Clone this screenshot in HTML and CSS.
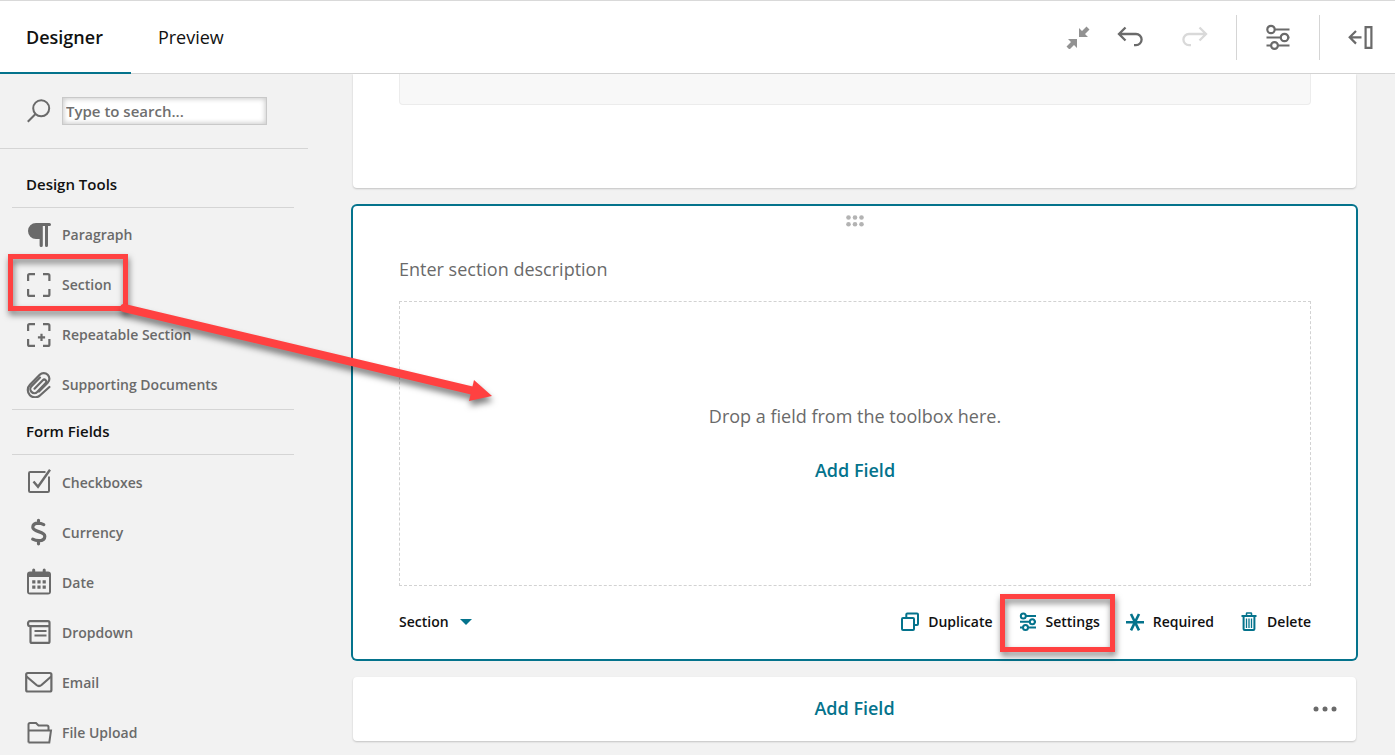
FILE: index.html
```html
<!DOCTYPE html>
<html lang="en">
<head>
  <meta charset="UTF-8">
  <meta name="viewport" content="width=device-width, initial-scale=1.0">
  <title>Form Designer</title>
  <link rel="stylesheet" href="styles.css">
</head>
<body>

  <header class="topbar">
    <nav class="tabs">
      <a href="#designer" class="tab active">Designer</a>
      <a href="#preview" class="tab">Preview</a>
    </nav>
    <div class="actions">
      <button class="icon-btn collapse" aria-label="Collapse">
        <svg width="24" height="24" viewBox="0 0 24 24" fill="#929292"><path d="M13 3v9h9l-3-3 4.500-4.500-3-3L16 6zM2 14h9v9l-3-3-4.500 4.500-3-3L5 17z"/></svg>
      </button>
      <button class="icon-btn undo" aria-label="Undo">
        <svg width="28" height="24" viewBox="0 0 28 24" fill="none" stroke="#6a6a6a" stroke-width="2.300"><path d="M9.500 2.500 3 9 9.500 15.500M3.500 9H20a5.600 5.600 0 0 1 0 11.200h-2"/></svg>
      </button>
      <button class="icon-btn redo" aria-label="Redo" disabled>
        <svg width="28" height="24" viewBox="0 0 28 24" fill="none" stroke="#d9d9d9" stroke-width="2.300"><path d="M18.500 2.500 25 9 18.500 15.500M24.500 9H8a5.600 5.600 0 0 0 0 11.200h2"/></svg>
      </button>
      <button class="icon-btn boxed" aria-label="Form settings">
        <svg width="24" height="26" viewBox="0 0 24 26" fill="none" stroke="#6a6a6a" stroke-width="2.200"><circle cx="5" cy="5.500" r="3.700"/><circle cx="18.500" cy="13.500" r="3.700"/><circle cx="8.500" cy="21.500" r="3.400"/><path d="M8.700 5.500H23.500M.5 13.500h14.300M22.200 13.500h1.300M.5 21.500h4.300M12.200 21.500h11.300"/></svg>
      </button>
      <button class="icon-btn boxed panel" aria-label="Open panel">
        <svg width="26" height="24" viewBox="0 0 26 24" fill="none" stroke="#6a6a6a" stroke-width="2.200"><path d="M8 6 1.700 12.300 8 18.600M2 12.300H13.500"/><path d="M17.600 2.100h5.800v20.800h-5.800z"/></svg>
      </button>
    </div>
  </header>

  <main class="workspace">
    <aside class="toolbox">
      <div class="search">
        <label for="toolSearch" aria-label="Search tools">
          <svg width="24" height="24" viewBox="0 0 24 24" fill="none" stroke="#6a6a6a" stroke-width="2"><circle cx="14.200" cy="9.300" r="8"/><path d="M8.500 15 .8 22.700"/></svg>
        </label>
        <input type="text" id="toolSearch" placeholder="Type to search...">
      </div>

      <section class="tool-group">
        <h2>Design Tools</h2>
        <ul>
          <li><button class="tool">
            <svg width="28" height="28" viewBox="0 0 28 28" fill="#6a6a6a"><path d="M11 3h13.500a1.400 1.400 0 0 1 0 3H23v19.500a1.500 1.500 0 0 1-3 0V6h-2.200v19.500a1.600 1.600 0 0 1-3.200 0V19H11a8 8 0 0 1 0-16z"/></svg>
            Paragraph</button></li>
          <li><button class="tool">
            <svg width="28" height="28" viewBox="0 0 28 28" fill="none" stroke="#6a6a6a" stroke-width="2.200"><path d="M3.100 11V5.600Q3.100 4.100 4.600 4.100H10M18 4.100h4.900q1.500 0 1.500 1.500V11M24.400 19v5.400q0 1.500-1.500 1.500H18M10 25.900H4.600q-1.500 0-1.500-1.500V19"/></svg>
            Section</button><span class="callout callout-tool"></span></li>
          <li><button class="tool">
            <svg width="28" height="28" viewBox="0 0 28 28" fill="none" stroke="#6a6a6a" stroke-width="2.200"><path d="M3.100 11V5.600Q3.100 4.100 4.600 4.100H10M18 4.100h4.900q1.500 0 1.500 1.500V11M24.400 19v5.400q0 1.500-1.500 1.500H18M10 25.900H4.600q-1.500 0-1.500-1.500V19M16.500 13.700v7.200M12.900 17.300h7.200"/></svg>
            Repeatable Section</button></li>
          <li><button class="tool">
            <svg width="28" height="28" viewBox="0 -1 28 28" fill="none" stroke="#6a6a6a" stroke-width="2.200" stroke-linecap="round" stroke-linejoin="round"><path d="M9.500 17.700 17.800 9.200a2 2 0 0 1 2.900 2.900L12.200 20.900a4 4 0 0 1-5.700-5.700L15 6.600"/><path d="M24.400 16 15.200 24.300a7.300 7.300 0 0 1-10.300-.1 7.300 7.300 0 0 1 0-10.300L14.700 3.800a5.600 5.600 0 0 1 8 0 5.600 5.600 0 0 1 0 8L14 20.500"/></svg>
            Supporting Documents</button></li>
        </ul>
      </section>

      <section class="tool-group form-fields">
        <h2>Form Fields</h2>
        <ul>
          <li><button class="tool">
            <svg width="28" height="28" viewBox="0 0 28 28" fill="none" stroke="#6a6a6a" stroke-width="2"><path d="M20.500 4H5.200Q4 4 4 5.200v17.600Q4 24 5.200 24h17.600q1.200 0 1.200-1.200V8.500"/><path d="M8.500 13.500 13 18.800 25 1.800" stroke-width="2.400"/></svg>
            Checkboxes</button></li>
          <li><button class="tool">
            <svg width="28" height="28" viewBox="0 0 28 28" fill="none" stroke="#6a6a6a" stroke-width="3.200" stroke-linecap="round"><path d="M18.800 6.600C16.700 5.600 15 5.200 13.300 5.200 9.800 5.200 7.800 6.900 7.800 9.300c0 5.200 12 3.400 12 9 0 2.700-2.300 4.400-5.900 4.400-2.300 0-4.400-.5-6.200-1.500M13.500 2.300v3M13.500 23v2.800"/></svg>
            Currency</button></li>
          <li><button class="tool">
            <svg width="28" height="28" viewBox="0 0 28 28" fill="#6a6a6a"><path fill-rule="evenodd" d="M7.200 3.500V2a1.500 1.500 0 0 1 3 0v1.500h7.500V2a1.500 1.500 0 0 1 3 0v1.500H23q3 0 3 3v17q0 3-3 3H5q-3 0-3-3v-17q0-3 3-3zM4 9v15.500h20V9z"/><path d="M7.200 12.300h3.200v3.200H7.200zM12.400 12.300h3.200v3.200h-3.200zM17.600 12.300h3.200v3.200h-3.200zM7.200 17.500h3.200v3.200H7.200zM12.400 17.500h3.200v3.200h-3.200zM17.600 17.500h3.200v3.200h-3.200z"/></svg>
            Date</button></li>
          <li><button class="tool">
            <svg width="28" height="28" viewBox="0 0 28 28" fill="none" stroke="#6a6a6a" stroke-width="2.200"><path d="M24.500 8.200H5q-2 0-2-2.500t2-2.500h18q1.500 0 1.500 1.500v18.700q0 1.500-1.500 1.500H7q-1.500 0-1.500-1.500V8.200M9.500 13h12M9.500 17.500h12"/></svg>
            Dropdown</button></li>
          <li><button class="tool">
            <svg width="28" height="28" viewBox="0 0 28 28" fill="none" stroke="#6a6a6a" stroke-width="2.200"><rect x="1.200" y="5" width="25.200" height="18.500" rx="1.500"/><path d="M1.500 8.500 11.500 17q2.500 2 5 0L26.200 8.500"/></svg>
            Email</button></li>
          <li><button class="tool">
            <svg width="28" height="28" viewBox="0 0 28 28" fill="none" stroke="#6a6a6a" stroke-width="2"><path d="M3.500 24.500V6.500q0-1.500 1.500-1.500h6L13.500 7.500H22q1.500 0 1.500 1.500V12.500M3.500 12.500H26l-1.700 12H3.500"/></svg>
            File Upload</button></li>
        </ul>
      </section>
    </aside>

    <div class="canvas">
      <div class="card card-previous">
        <div class="field-stub"></div>
      </div>

      <div class="card card-section">
        <svg class="drag-handle" width="20" height="12" viewBox="0 0 20 12" fill="#b3b3b3"><circle cx="3.500" cy="2.500" r="2.300"/><circle cx="10" cy="2.500" r="2.300"/><circle cx="16.500" cy="2.500" r="2.300"/><circle cx="3.500" cy="9.300" r="2.300"/><circle cx="10" cy="9.300" r="2.300"/><circle cx="16.500" cy="9.300" r="2.300"/></svg>
        <input type="text" class="description" aria-label="Section description" placeholder="Enter section description">
        <div class="dropzone">
          <p>Drop a field from the toolbox here.</p>
          <button class="add-field">Add Field</button>
        </div>
        <div class="card-footer">
          <div class="type-picker">
            <select aria-label="Field type">
              <option>Section</option>
            </select>
            <svg width="12" height="8" viewBox="0 0 12 8" fill="#04738c"><path d="M0 2h12L6 8z"/></svg>
          </div>
          <div class="card-actions">
            <button class="card-action">
              <svg width="20" height="20" viewBox="0 0 20 20" fill="none" stroke="#04738c" stroke-width="2"><path d="M6.300 6.500V3.500q0-1 1-1H17q1 0 1 1V13q0 1-1 1h-3"/><rect x="2" y="7" width="12" height="12" rx="1"/></svg>
              Duplicate</button>
            <button class="card-action settings">
              <svg width="20" height="20" viewBox="0 0 20 20" fill="none" stroke="#04738c" stroke-width="2"><circle cx="5.300" cy="5" r="2.500"/><circle cx="14.300" cy="10.700" r="2.500"/><circle cx="7.500" cy="16.400" r="2.500"/><path d="M7.800 5H18M2 10.700h9.800M16.800 10.700H18M2 16.400h3M10 16.400h8"/></svg>
              Settings<span class="callout callout-settings"></span></button>
            <button class="card-action">
              <svg width="20" height="20" viewBox="0 0 20 20" fill="none" stroke="#04738c" stroke-width="2.600"><path d="M1 11.200h18M6 3l8 16.400M14 3 6 19.400"/></svg>
              Required</button>
            <button class="card-action">
              <svg width="20" height="20" viewBox="0 0 20 20" fill="none" stroke="#04738c"><path stroke-width="2" d="M2.500 5h15M4.600 5.500V18q0 1 1 1h8.800q1 0 1-1V5.500"/><path stroke-width="1.500" d="M7.500 4.500v-2q0-.5.500-.5h4q.5 0 .5.500v2"/><path d="M7.500 7.500V17M10 7.500V17M12.500 7.500V17" stroke-width="1.300"/></svg>
              Delete</button>
          </div>
        </div>
      </div>

      <div class="card card-add">
        <button class="add-field">Add Field</button>
        <button class="more" aria-label="More options">
          <svg width="24" height="6" viewBox="0 0 24 6" fill="#6a6a6a"><circle cx="3" cy="3" r="2.500"/><circle cx="12" cy="3" r="2.500"/><circle cx="21" cy="3" r="2.500"/></svg>
        </button>
      </div>
    </div>

    <!-- drag hint, from the Section tool to the drop area -->
    <svg class="drag-arrow" width="390" height="110" viewBox="0 0 390 110"><path d="M5 8 355 91" stroke="#ff4141" stroke-width="8" stroke-linecap="round"/><path d="M355 80 373 96 350 101z" fill="#ff4141"/></svg>
  </main>

</body>
</html>
```
FILE: styles.css
```css
* {
  box-sizing: border-box;
}

body {
  display: flex;
  flex-direction: column;
  height: 100vh;
  margin: 0;
  overflow: hidden;
  font-family: "Open Sans", "Noto Sans", sans-serif;
  font-size: 14px;
  color: #111;
  background: #f2f2f2;
}

button, input, select {
  font: inherit;
  color: inherit;
}

button {
  padding: 0;
  border: none;
  background: none;
  cursor: pointer;
}

svg {
  display: block;
  flex: none;
}

/* top bar */
.topbar {
  display: flex;
  flex: none;
  justify-content: space-between;
  height: 74px;
  background: #fff;
  border-top: 1px solid #d9d9d9;
  border-bottom: 1px solid #d5d5d5;
}

.tabs {
  display: flex;
  gap: 1px;
  margin-bottom: -1px;
}

.tab {
  display: flex;
  align-items: center;
  padding: 0 28px 0 26px;
  border-bottom: 2px solid transparent;
  font-size: 18px;
  color: #111;
  text-decoration: none;
}

.tab.active {
  border-color: #04738c;
  font-weight: 600;
}

.actions {
  display: flex;
  align-items: center;
  padding-right: 21px;
}

.icon-btn {
  display: flex;
  align-items: center;
}

.undo {
  margin-left: 26px;
}

.redo {
  margin: 0 27px 0 37px;
}

.boxed {
  height: 45px;
  padding: 0 29px;
  border-left: 1px solid #d5d5d5;
}

.boxed.panel {
  padding-right: 0;
  padding-left: 28px;
}

/* layout */
.workspace {
  position: relative;
  display: flex;
  flex: 1;
  min-height: 0;
}

.toolbox {
  flex: none;
  width: 308px;
}

.canvas {
  display: flex;
  flex: 1;
  flex-direction: column;
  gap: 18px;
  padding: 0 39px 0 45px;
}

/* toolbox */
.search {
  display: flex;
  align-items: center;
  gap: 11px;
  height: 75px;
  padding-left: 27px;
  border-bottom: 1px solid #d5d5d5;
}

.search input {
  width: 205px;
  height: 28px;
  padding: 0 3px;
  border: 1px solid #c9c9c9;
  background: #fff;
  box-shadow: inset 0 0 5px 1px #ccc;
  font-size: 15px;
  font-weight: 600;
}

.search input::placeholder {
  color: #6f6f6f;
  opacity: 1;
}

.tool-group {
  width: 282px;
  margin: 14px 0 0 12px;
}

.tool-group.form-fields {
  margin-top: 0;
  border-top: 1px solid #d5d5d5;
}

.tool-group h2 {
  margin: 0;
  padding: 0 0 2px 14px;
  border-bottom: 1px solid #d5d5d5;
  font-size: 15px;
  font-weight: 600;
  line-height: 42px;
}

.tool-group ul {
  margin: 0;
  padding: 1px 0 0;
  list-style: none;
}

.form-fields ul {
  padding-top: 2px;
}

.tool-group li {
  position: relative;
}

.tool {
  display: flex;
  align-items: center;
  gap: 9px;
  width: 100%;
  height: 50px;
  padding-left: 13px;
  font-weight: 600;
  color: #6a6a6a;
}

/* cards */
.card {
  background: #fff;
  border-radius: 4px;
  box-shadow: 0 1px 2px rgba(0, 0, 0, 0.2);
}

.card-previous {
  padding: 0 45px 83px 46px;
  border-top-left-radius: 0;
  border-top-right-radius: 0;
}

.field-stub {
  height: 31px;
  background: #f8f8f8;
  border: 1px solid #ececec;
  border-top: none;
  border-radius: 0 0 4px 4px;
}

.card-section {
  display: flex;
  flex-direction: column;
  padding: 9px 45px 23px 46px;
  box-shadow: 0 0 0 2px #04738c;
}

.drag-handle {
  margin: 0 auto 26px;
}

.description {
  width: 100%;
  height: 32px;
  padding: 0;
  border: none;
  font-size: 18px;
}

.description::placeholder {
  color: #6a6a6a;
  opacity: 1;
}

.dropzone {
  display: flex;
  flex-direction: column;
  align-items: center;
  justify-content: center;
  gap: 30px;
  min-height: 285px;
  margin-top: 16px;
  border: 1px dashed #d2d2d2;
  font-size: 18px;
  line-height: 24px;
  color: #6a6a6a;
}

.dropzone p {
  margin: 0;
}

.add-field {
  padding-bottom: 2px;
  font-size: 18px;
  font-weight: 600;
  color: #04738c;
}

.card-footer {
  display: flex;
  align-items: center;
  justify-content: space-between;
  margin-top: 20px;
  font-weight: 600;
}

.type-picker {
  position: relative;
  display: flex;
  align-items: center;
}

.type-picker select {
  padding: 0 24px 0 0;
  border: none;
  background: none;
  appearance: none;
}

.type-picker svg {
  margin-left: -13px;
  pointer-events: none;
}

.card-actions {
  display: flex;
  gap: 25px;
}

.card-action {
  position: relative;
  display: flex;
  align-items: center;
  gap: 8px;
  height: 30px;
}

.card-add {
  display: grid;
  grid-template-columns: 1fr auto 1fr;
  align-items: center;
  min-height: 64px;
  padding: 0 19px;
}

.card-add .add-field {
  grid-column: 2;
}

.more {
  justify-self: end;
}

/* callouts */
.callout {
  position: absolute;
  border: 5px solid #ff4141;
  filter: drop-shadow(1px 4px 3px rgba(0, 0, 0, 0.5));
  pointer-events: none;
}

.callout-tool {
  top: -5px;
  left: -4px;
  width: 120px;
  height: 57px;
}

.callout-settings {
  top: -12px;
  right: -15px;
  left: -18px;
  height: 58px;
}

.drag-arrow {
  position: absolute;
  top: 226px;
  left: 119px;
  overflow: visible;
  filter: drop-shadow(1px 5px 3px rgba(0, 0, 0, 0.5));
  pointer-events: none;
}
```
